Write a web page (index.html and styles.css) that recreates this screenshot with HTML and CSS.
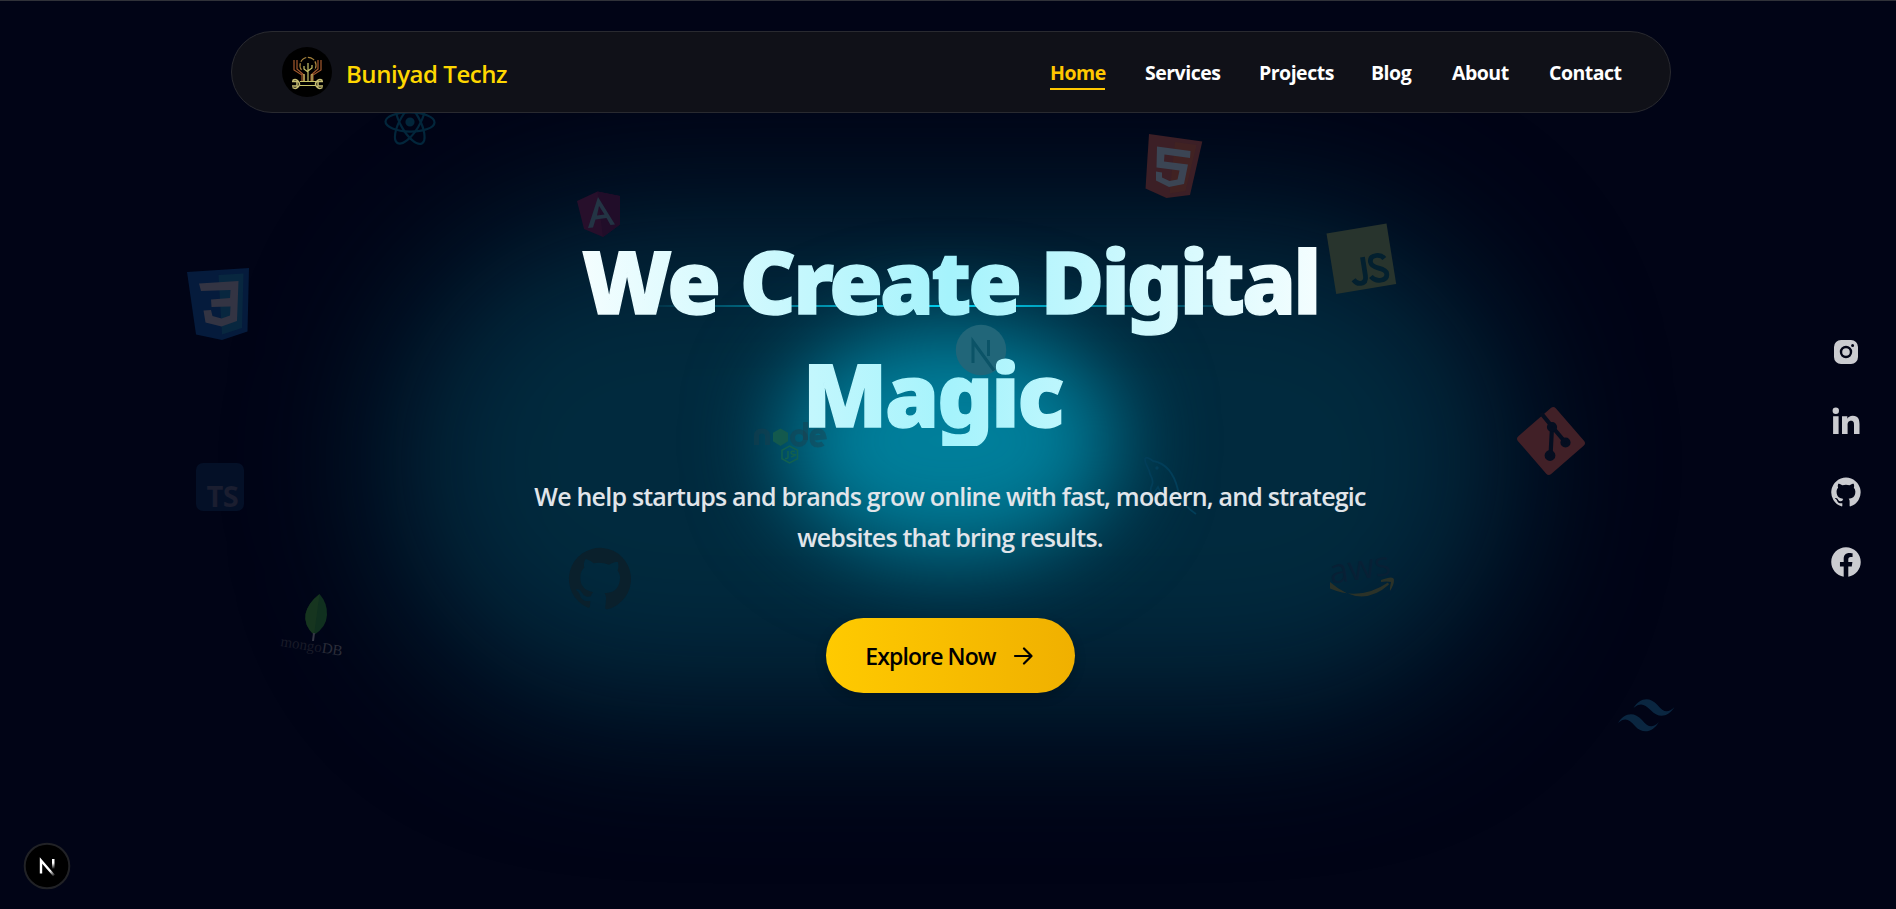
FILE: index.html
```html
<!DOCTYPE html>
<html lang="en">
<head>
<meta charset="utf-8">
<title>Buniyad Techz</title>
<link rel="stylesheet" href="styles.css">
</head>
<body>
<div class="glow glow-wide"></div>
<div class="glow glow-core"></div>
<div class="beam"></div>

<svg class="tech" viewBox="0 0 1896 909" aria-hidden="true">
  <!-- React -->
  <g transform="translate(410 122) rotate(1)" fill="none" stroke="#02263b" stroke-width="2.2">
    <ellipse rx="24.5" ry="9.6"/><ellipse rx="24.5" ry="9.6" transform="rotate(60)"/><ellipse rx="24.5" ry="9.6" transform="rotate(120)"/>
    <circle r="4.6" fill="#02263b" stroke="none"/>
  </g>
  <!-- Angular -->
  <g>
    <path fill="#270f2b" d="M597.5 191.5 620 196v28.500L603 237l-19-8-7-28z"/>
    <path fill="#210d29" d="M597.500 191.500 620 196v28.500L603 237z"/>
    <path fill="#233444" fill-rule="evenodd" d="M598 197 588 228l5-.5 2.500-8 11-1.500 4 7 4.500-.5zM599 206l5.500 8.500-7.500 1z"/>
  </g>
  <!-- HTML5 -->
  <g>
    <path fill="#3c1f26" d="m1149 134 53.300 7.500L1190 195l-23.500 3-21-9.500z"/>
    <path fill="#44241f" opacity=".6" d="m1175 142 21.500 3-11 46-16 2.500z"/>
    <path fill="#3b4554" d="m1157 146.500 33.500 4.500-.5 7-25.500-3.500-.5 7 24 3-4 19.500-15 3-13-6.500v-9l6 1v5l7.500 3.500 8-1.500 2-9-23-3z"/>
  </g>
  <!-- CSS3 -->
  <g>
    <path fill="#051b3c" d="m187 272 62-4-1.500 63.500L222 340l-26-5.500z"/>
    <path fill="#08273f" d="m218.500 275 25-1.500L242 328l-20 6.500z"/>
    <path fill="#333443" d="m199 283.500 39.500-2.500-1.500 40-15.500 5.500-16-4-2-12 7.500-.5 1.500 6 9 2.500 8.500-3 .5-9-19 .5-.5-7.500 19-1.500.5-8-29.500 1z"/>
  </g>
  <!-- JavaScript -->
  <g>
    <path fill="#28342d" d="m1326.500 233.500 60-10 9.700 60.500-60 10z"/>
    <g transform="translate(1357 259) rotate(-9) scale(.95)" fill="none" stroke="#03202f" stroke-width="5"><path d="M6-1v20q0 7-6 7-4.500 0-7-5"/><path d="M28.500 4Q26-.5 20.500-.5q-7 0-7 6 0 4.500 7.500 7.500t7.500 7q0 6-7.500 6-6 0-9.500-5.500"/></g>
  </g>
  <!-- Next.js -->
  <g>
    <circle cx="981" cy="350" r="25.200" fill="#216679"/>
    <path d="M973 363v-21.500l21 29" fill="none" stroke="#0b5367" stroke-width="3"/><path d="M988.500 340v16" stroke="#0b5367" stroke-width="3"/>
  </g>
  <!-- TypeScript -->
  <g>
    <rect x="196" y="463" width="48" height="48" rx="7" fill="#041027"/>
    <text x="206.500" y="507" class="ts">TS</text>
  </g>
  <!-- Node.js -->
  <g>
    <g fill="none" stroke="#1e3c48" stroke-opacity=".4" stroke-width="5">
      <path d="M756.500 445v-9q0-5 5.500-5t5.500 5v9"/><circle cx="799" cy="438" r="6.500"/><path d="M805.500 440v-18"/><path d="m813 438 11-1q-1-6-6-6-6 0-6 7t6 7q3 0 5-1.500"/>
    </g>
    <path fill="#13594d" d="m780.500 428.500 7.500 4.200v8.600l-7.500 4.700-7.500-4.700v-8.600z"/>
    <g fill="none" stroke="#12604f" stroke-width="1.500"><path d="m789.500 446 8 4.300v8.400l-8 4.300-7.500-4.300v-8.400z"/><path d="M788 451v6q0 2-3 1.500M795 451.500q-4-1-4 1t3.500 2-3.500 2.500"/></g>
  </g>
  <!-- MongoDB -->
  <g>
    <path fill="#10301f" d="M319.500 594q8 9 7.500 21t-13 20q-10.500-10-8.500-21 2.500-11 14-20z"/>
    <path fill="#19381f" opacity=".7" d="M319.500 594 314 635q-10.500-10-8.500-21 2.500-11 14-20z"/>
    <path d="m314 633-1 8" stroke="#353745" stroke-width="2"/>
    <text transform="translate(280 646) rotate(9)" class="mongo"><tspan fill="#191b28">mongo</tspan><tspan fill="#2b2d39">DB</tspan></text>
  </g>
  <!-- GitHub -->
  <g transform="translate(569 547) rotate(5 31 31) scale(2.600)" fill="#0a202c"><path d="M12 .3a12 12 0 0 0-3.800 23.380c.6.120.83-.26.830-.57L9 21.070c-3.340.72-4.040-1.610-4.040-1.610-.55-1.390-1.330-1.760-1.330-1.760-1.090-.74.080-.73.080-.73 1.200.09 1.840 1.240 1.840 1.240 1.070 1.830 2.800 1.300 3.490 1 .1-.78.420-1.310.760-1.610-2.670-.3-5.470-1.330-5.470-5.930 0-1.310.470-2.380 1.240-3.220-.14-.3-.54-1.520.1-3.180 0 0 1-.32 3.300 1.230a11.500 11.500 0 0 1 6 0c2.280-1.550 3.290-1.230 3.290-1.230.640 1.660.240 2.880.120 3.180a4.650 4.650 0 0 1 1.230 3.220c0 4.610-2.800 5.630-5.480 5.920.420.360.810 1.100.810 2.220l-.01 3.290c0 .31.200.69.820.57A12 12 0 0 0 12 .3"/></g>
  <!-- MySQL -->
  <g fill="none" stroke="#023e59" stroke-width="1.800">
    <path d="M1196 514c-9-6-16-13-18-24-4-17-13-27-25-29-4-3-8-5-8-1 0 5 4 7 5 14 2 4 4 7 2 11-3 6 0 10 2 8l4-6 5 11"/><circle cx="1157" cy="468" r=".8"/>
  </g>
  <!-- Git -->
  <g>
    <rect x="1526" y="416" width="50" height="50" rx="3.500" transform="rotate(49 1551 441)" fill="#412027"/>
    <g stroke="#050e20" stroke-width="4.200" fill="#050e20"><path d="m1541 413 11 13.500 13.500 16M1552 427l-1.500 29" fill="none"/><circle cx="1552" cy="427" r="3"/><circle cx="1565.500" cy="442.500" r="3"/><circle cx="1550" cy="455.500" r="3.300"/></g>
  </g>
  <!-- AWS -->
  <g>
    <text transform="translate(1331 584) rotate(-9)" class="aws">aws</text>
    <path fill="#2b3228" d="M1330 588.500q30 13 58-6l1 2q-28 25-59-2.500v6.500zM1381 580q13-5 13 0 0 5-4 11-.5-2 1-9-4-1-10 0z"/>
  </g>
  <!-- Tailwind -->
  <path fill="#0a2640" d="M1633.500 708c6-10 16-12 24-3 6 7 10 9 17 2-6 10-16 12-24 3-6-6-10-8-17-2zM1618 723c6-10 16-12 24-3 6 7 10 9 17 2-6 10-16 13-24 4-6-7-10-9-17-3z"/>
</svg>

<header class="nav">
  <a class="brand">
    <svg class="logo" viewBox="0 0 50 50">
      <circle cx="25" cy="25" r="25" fill="#000"/>
      <g fill="none" stroke-width="1.200">
        <path stroke="#a8843c" stroke-dasharray="7 1.500" d="M19.500 23a8 8 0 1 1 13 0"/>
        <path stroke="#a4592e" d="M15 13v9l7 6v7M12 13v10l8 5v6M36 13v9l-7 6v7M39 13v10l-8 5v6"/>
        <path stroke="#c8c46a" d="M26 34V16M26 25l-4-3v-3M26 24l4-3v-3M22 34v-7M30 34v-7M18 34.500h16M18 38.500h16"/>
        <path stroke="#c8bf74" stroke-width="1.500" d="M10 34.500h5v4.500h-5M10.500 33.500a4.300 4.300 0 1 1 0 7M41 34.500h-5v4.500h5M40.500 33.500a4.300 4.300 0 1 0 0 7"/>
      </g>
    </svg>
    <span class="brand-name">Buniyad Techz</span>
  </a>
  <nav class="links">
    <a class="link w-home active">Home</a>
    <a class="link w-services">Services</a>
    <a class="link w-projects">Projects</a>
    <a class="link w-blog">Blog</a>
    <a class="link w-about">About</a>
    <a class="link w-contact">Contact</a>
  </nav>
</header>

<main class="hero">
  <h1 class="title">We Create Digital<br><span class="title-end">Magic&nbsp;</span></h1>
  <p class="lead">We help startups and brands grow online with fast, modern, and strategic<br>websites that bring results.</p>
  <a class="cta"><span>Explore Now</span>
    <svg class="arrow" viewBox="0 0 24 24"><path d="M4 12h16M13 4.500l7.500 7.500-7.500 7.500"/></svg>
  </a>
</main>

<aside class="social">
  <svg viewBox="0 0 30 30"><path fill-rule="evenodd" d="M10 3h10a7 7 0 0 1 7 7v10a7 7 0 0 1-7 7H10a7 7 0 0 1-7-7V10a7 7 0 0 1 7-7zM15 8.800a6.200 6.200 0 1 0 0 12.400 6.200 6.200 0 0 0 0-12.400zm0 2.400a3.800 3.800 0 1 1 0 7.600 3.800 3.800 0 0 1 0-7.600zM21.600 6.900a1.500 1.500 0 1 0 0 3 1.500 1.500 0 0 0 0-3z"/></svg>
  <svg viewBox="0 1 30 30"><circle cx="4.800" cy="4.800" r="3.200"/><path d="M2.100 10.300h5.500V28H2.100zM11 10.300h5.300v2.400c.8-1.500 2.700-2.900 5.500-2.900 5.600 0 6.700 3.700 6.700 8.500V28H23v-8.600c0-2.100 0-4.700-2.900-4.700s-3.500 2.200-3.500 4.500V28H11z"/></svg>
  <svg viewBox="-.2 -.2 24.400 24.400"><path d="M12 .3a12 12 0 0 0-3.800 23.380c.6.120.83-.26.830-.57L9 21.070c-3.340.72-4.040-1.610-4.040-1.610-.55-1.390-1.330-1.760-1.330-1.760-1.090-.74.080-.73.080-.73 1.200.09 1.840 1.240 1.840 1.240 1.070 1.830 2.800 1.300 3.490 1 .1-.78.420-1.310.760-1.610-2.670-.3-5.470-1.330-5.470-5.930 0-1.310.470-2.380 1.240-3.220-.14-.3-.54-1.520.1-3.180 0 0 1-.32 3.300 1.230a11.500 11.500 0 0 1 6 0c2.280-1.550 3.290-1.230 3.290-1.230.640 1.660.240 2.880.120 3.180a4.650 4.650 0 0 1 1.230 3.220c0 4.610-2.800 5.630-5.480 5.920.420.360.810 1.100.810 2.220l-.01 3.290c0 .31.200.69.820.57A12 12 0 0 0 12 .3"/></svg>
  <svg viewBox="-.2 -.2 24.400 24.400"><path d="M24 12.070C24 5.410 18.630 0 12 0S0 5.410 0 12.070C0 18.100 4.390 23.090 10.130 24v-8.440H7.080v-3.490h3.050V9.410c0-3.020 1.790-4.690 4.530-4.690 1.310 0 2.680.24 2.680.24v2.970h-1.510c-1.490 0-1.960.93-1.960 1.890v2.250h3.330l-.53 3.490h-2.800V24C19.610 23.090 24 18.100 24 12.070"/></svg>
</aside>

<svg class="dev-badge" viewBox="0 0 48 48">
  <defs><linearGradient id="n1" x1="0" y1="0" x2="0" y2="1"><stop offset=".4" stop-color="#fff"/><stop offset="1" stop-color="#fff" stop-opacity="0"/></linearGradient>
  <linearGradient id="n2" x1="17" y1="17" x2="31" y2="34" gradientUnits="userSpaceOnUse"><stop offset=".7" stop-color="#fff"/><stop offset="1" stop-color="#fff" stop-opacity=".1"/></linearGradient></defs>
  <circle cx="24" cy="24" r="22.300" fill="#000" stroke="#212226" stroke-width="2"/>
  <path d="M18 31.500V18.500L31 33.500" fill="none" stroke="url(#n2)" stroke-width="2.400"/>
  <path d="M29 17h2.500v10h-2.500z" fill="url(#n1)"/>
</svg>
</body>
</html>
```

FILE: styles.css
```css
* { box-sizing: border-box; }
html { background: #010416; }
body {
  margin: 0;
  width: 1896px;
  height: 909px;
  position: relative;
  overflow: hidden;
  border-top: 1px solid #303239;
  background: #010416;
  color: #fff;
  font-family: "Open Sans", "Noto Sans", sans-serif;
}
.glow { position: absolute; }
.glow-wide {
  left: 390px; top: 216px; width: 1120px; height: 490px;
  border-radius: 245px;
  background: #012a3e;
  filter: blur(74px);
}
.glow-core {
  left: 780px; top: 322px; width: 340px; height: 236px;
  border-radius: 50%;
  background: #007f9b;
  filter: blur(46px);
}
.beam {
  position: absolute;
  left: 630px; top: 304px; width: 640px; height: 2px;
  background: linear-gradient(90deg, transparent, #00d0f0 50%, transparent);
}
.tech { position: absolute; left: 0; top: -1px; width: 1896px; height: 909px; }
.ts { font: 700 29px "Open Sans", sans-serif; fill: #1b1e30; letter-spacing: -.5px; }
.mongo { font: 15px "Liberation Serif", serif; }
.aws { font: 500 34px "Open Sans", sans-serif; fill: #082035; }

.nav {
  position: relative;
  width: 1440px;
  height: 82px;
  margin: 30px 0 0 231px;
  padding: 0 50px;
  display: flex;
  align-items: center;
  justify-content: space-between;
  border: 1px solid #292a30;
  border-radius: 41px;
  background: #101118;
}
.brand { display: flex; align-items: center; gap: 14px; }
.logo { width: 50px; height: 50px; }
.brand-name { font-size: 24px; font-weight: 650; color: #ffd700; letter-spacing: -.45px; white-space: nowrap; padding-top: 2px; }
.links { display: flex; gap: 40px; padding-top: 2px; }
.link { font-size: 19.500px; font-weight: 670; line-height: 27px; height: 34px; padding-top: 3px; letter-spacing: -.5px; white-space: nowrap; }
.w-home { width: 55px; }
.w-services { width: 74px; }
.w-projects { width: 72px; }
.w-blog { width: 41px; }
.w-about { width: 57px; }
.w-contact { width: 71px; }
.active { color: #ffc700; border-bottom: 2px solid #ffc700; }

.hero {
  position: relative;
  width: 900px;
  margin: 108px auto 0;
  left: 2px;
  display: flex;
  flex-direction: column;
  align-items: center;
  text-align: center;
}
.title {
  margin: 0;
  width: 840px;
  height: 225px;
  padding-top: 3px;
  font: 900 87px/112.500px "Noto Sans", "Open Sans", sans-serif;
  letter-spacing: -3px;
  word-spacing: 2px;
  white-space: nowrap;
  color: transparent;
  -webkit-text-stroke: 1.500px transparent;
  background: linear-gradient(90deg, #fff, #a5f3fc 50%, #fff);
  background-clip: text;
  -webkit-background-clip: text;
}
.title-end { letter-spacing: -2px; padding-right: 12px; }
.lead {
  margin: 30px 0 0;
  font-size: 25px;
  font-weight: 640;
  line-height: 41px;
  letter-spacing: -.79px;
  white-space: nowrap;
  color: #e1e5ea;
}
.cta {
  margin-top: 60px;
  width: 249px;
  height: 75px;
  display: flex;
  align-items: center;
  justify-content: center;
  gap: 15px;
  border-radius: 38px;
  background: linear-gradient(90deg, #ffca00, #f0b000);
  box-shadow: 0 4px 12px rgba(0, 0, 0, .2);
  color: #000;
  font-size: 23px;
  font-weight: 550;
  letter-spacing: -.9px;
  white-space: nowrap;
}
.arrow { width: 24px; height: 24px; fill: none; stroke: #000; stroke-width: 2.200; stroke-linecap: round; stroke-linejoin: round; }
.social { position: absolute; left: 1831px; top: 336px; display: grid; gap: 40px; }
.social svg { width: 30px; height: 30px; fill: #cbccd0; }
.dev-badge { position: absolute; left: 23px; top: 841px; width: 48px; height: 48px; }
```
